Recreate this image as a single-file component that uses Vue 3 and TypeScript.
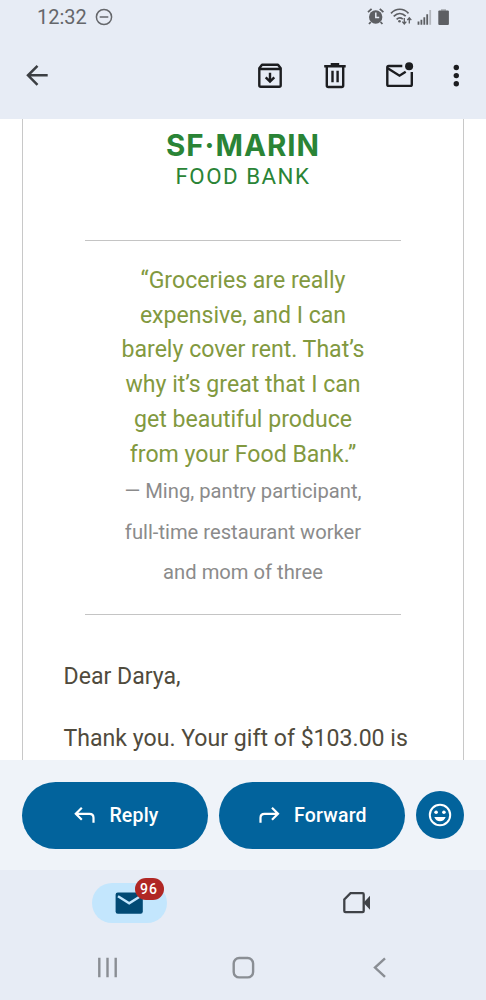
<script setup lang="ts">
const quoteLines: string[] = [
  '“Groceries are really',
  'expensive, and I can',
  'barely cover rent. That’s',
  'why it’s great that I can',
  'get beautiful produce',
  'from your Food Bank.”',
]
const citeLines: string[] = [
  '— Ming, pantry participant,',
  'full-time restaurant worker',
  'and mom of three',
]
const unread = 96
</script>

<template>
  <div class="screen">
    <header class="top">
      <div class="status">
        <span class="clock">12:32</span>
        <svg class="dnd" width="18" height="18" viewBox="0 0 18 18">
          <circle cx="9" cy="9" r="7.6" />
          <path d="M4.7 9h8.6" />
        </svg>
        <svg class="tray" width="86" height="20" viewBox="366 7 86 20">
          <g fill="#5d5f63">
            <circle cx="375.7" cy="17" r="6.7" />
            <path d="M368 12.2l3.6-3.4M383.4 12.2l-3.6-3.4M370.8 22l-1.8 2M380.6 22l1.8 2" stroke="#5d5f63" stroke-width="1.8" />
            <path d="M375.8 12.6v4.8h3.4" fill="none" stroke="#e7ecf5" stroke-width="1.5" />
          </g>
          <g fill="none" stroke="#5d5f63" stroke-width="1.7">
            <path d="M391 13.300c5-5.400 12.500-5.400 17.500 0" />
            <path d="M393.700 16.400c3.700-3.600 8.500-3.600 12 -.2" />
            <path d="M396.600 19.300c2-1.800 4.200-1.800 6.200-.2" />
            <path d="M404.300 18v5.800m-2-2.200 2 2.300 2-2.300M409.300 23.500v-5.600m-2 2.200 2-2.300 2 2.300" stroke-width="1.3" />
          </g>
          <circle cx="399.500" cy="21.300" r="1.300" fill="#5d5f63" />
          <g stroke="#5d5f63" stroke-width="1.800">
            <path d="M418.500 24.800v-3.300M421.400 24.800v-5M424.300 24.800v-7.500M427.200 24.800v-10.500" />
            <path d="M430.200 24.800V10" stroke="#b4b8be" />
          </g>
          <path d="M441 9h5v2h-5z" fill="#b4b8be" />
          <rect x="438.300" y="10.600" width="10.600" height="14.300" rx="1" fill="#5d5f63" />
        </svg>
      </div>
      <div class="toolbar">
        <svg class="back" width="32" height="32" viewBox="21 60 32 32">
          <path d="M47.700 75.300H28M37.500 65.800L28 75.300l9.500 9.500" fill="none" stroke="#3c3f43" stroke-width="2.500" />
        </svg>
        <svg width="32" height="32" viewBox="254 60 32 32">
          <g fill="none" stroke="#1c1d20" stroke-width="2.400" stroke-linejoin="round">
            <path d="M259.300 68.200v17.100q0 1.500 1.500 1.500h18.400q1.500 0 1.500-1.500V68.200l-2.700-3.500h-16zM259.300 69h21.400" />
            <path d="M270 72.800v8M265.700 77.300l4.300 4.200 4.300-4.200" stroke-linejoin="miter" />
          </g>
        </svg>
        <svg class="trash" width="32" height="32" viewBox="319 60 32 32">
          <g fill="none" stroke="#1c1d20" stroke-width="2.400">
            <path d="M324.200 66.200h21.500M330.700 64.300h8.500" />
            <path d="M326.800 66.500v19q0 1.500 1.500 1.500h13.400q1.500 0 1.500-1.500v-19M332.500 70.700v11.500M337.600 70.700v11.500" />
          </g>
        </svg>
        <svg class="letter" width="32" height="32" viewBox="384 60 32 32">
          <g fill="none" stroke="#1c1d20" stroke-width="2.400">
            <path d="M402.300 66h-13.600q-1.400 0-1.400 1.400v17.100q0 1.400 1.400 1.400h21.700q1.400 0 1.400-1.400V72" />
            <path d="M387.700 68.200l11.800 7.500 6.200-4" />
          </g>
          <circle cx="409.100" cy="66.200" r="4" fill="#1c1d20" />
        </svg>
        <svg class="more" width="32" height="32" viewBox="440 60 32 32">
          <g fill="#1c1d20">
            <circle cx="456.300" cy="67.500" r="2.700" />
            <circle cx="456.300" cy="75.600" r="2.700" />
            <circle cx="456.300" cy="83.700" r="2.700" />
          </g>
        </svg>
      </div>
    </header>

    <main class="mail">
      <article class="card">
        <div class="brand">
          <div class="brand-name">SF·MARIN</div>
          <div class="brand-sub">FOOD BANK</div>
        </div>
        <blockquote class="quote">
          <p class="words"><span v-for="line in quoteLines" :key="line">{{ line }}</span></p>
          <p class="cite"><span v-for="line in citeLines" :key="line">{{ line }}</span></p>
        </blockquote>
        <p class="body greeting">Dear Darya,</p>
        <p class="body thanks">Thank you. Your gift of $103.00 is</p>
      </article>
    </main>

    <section class="actions">
      <button class="pill reply">
        <svg width="24" height="24" viewBox="72 803 24 24">
          <path d="M81.800 807.800l-6 6 6 6M76 813.800h13.500q4 0 4 4v5" />
        </svg>
        <span>Reply</span>
      </button>
      <button class="pill forward">
        <svg width="24" height="24" viewBox="257 803 24 24">
          <path d="M272 807.800l6 6-6 6M278 813.800h-13.500q-4 0-4 4v5" />
        </svg>
        <span>Forward</span>
      </button>
      <button class="react">
        <svg width="26" height="26" viewBox="427 802 26 26">
          <circle cx="440" cy="815" r="10.200" fill="none" stroke="#fff" stroke-width="2" />
          <circle cx="436.100" cy="812.300" r="1.800" fill="#fff" />
          <circle cx="443.900" cy="812.300" r="1.800" fill="#fff" />
          <path d="M434.300 817h11.400q-1.600 4.200-5.700 4.200t-5.700-4.200z" fill="#fff" />
        </svg>
      </button>
    </section>

    <nav class="tabs">
      <div class="tab-mail">
        <svg width="28" height="22" viewBox="115 891.500 28 22">
          <rect x="115.600" y="892" width="27.200" height="21.300" rx="2.200" fill="#024a74" />
          <path d="M118 895.800l11.200 7 11.200-7" fill="none" stroke="#c3e6fd" stroke-width="2.500" />
        </svg>
        <span class="badge">{{ unread }}</span>
      </div>
      <svg class="tab-video" width="30" height="24" viewBox="342 891 30 24">
        <path d="M350.500 893.200h12q1.200 0 1.200 1.200v16.500q0 1.200-1.200 1.200h-17q-1.200 0-1.200-1.200v-11.500z" fill="none" stroke="#3f4247" stroke-width="2.300" />
        <path d="M363.500 902.700l6.500-7v14z" fill="#3f4247" />
      </svg>
    </nav>

    <footer class="system">
      <svg width="24" height="24" viewBox="96 956 24 24">
        <path d="M99.300 957.700v19.500M107.500 957.700v19.500M115.700 957.700v19.500" />
      </svg>
      <svg class="home" width="24" height="24" viewBox="231.500 956 24 24">
        <rect x="233.200" y="958" width="19.400" height="19.400" rx="5.500" />
      </svg>
      <svg class="prev" width="24" height="24" viewBox="368 956 24 24">
        <path d="M385 958.300l-10 9.300 10 9.300" />
      </svg>
    </footer>
  </div>
</template>

<style>
body {
  background: #fff;
}
</style>

<style scoped>
.screen {
  display: flex;
  flex-direction: column;
  width: 486px;
  height: 1000px;
  overflow: hidden;
  background: #fff;
  font-family: Roboto, 'Liberation Sans', sans-serif;
}
svg {
  display: block;
  flex: none;
}
p,
blockquote {
  margin: 0;
}
.top {
  flex: none;
  height: 119px;
  background: #e7ecf5;
}
.status {
  display: flex;
  align-items: center;
  height: 34px;
  padding: 0 34px 0 37px;
}
.clock {
  width: 57.500px;
  color: #65676b;
  font-size: 20px;
  line-height: 34px;
}
.dnd {
  fill: none;
  stroke: #65676b;
  stroke-width: 1.5;
}
.tray {
  margin-left: auto;
}
.toolbar {
  display: flex;
  margin-top: 26px;
  padding-left: 21px;
}
.back {
  margin-right: 201px;
}
.trash,
.letter {
  margin-left: 33px;
}
.more {
  margin-left: 24px;
}
.mail {
  flex: none;
  height: 641px;
  overflow: hidden;
}
.card {
  box-sizing: border-box;
  width: 442px;
  height: 641px;
  margin-left: 22px;
  border: solid #c8c8c8;
  border-width: 0 1px;
  white-space: nowrap;
}
.brand {
  height: 121px;
  color: #2a8436;
  text-align: center;
}
.brand-name {
  padding-top: 10px;
  font: 650 29.500px/32px Inter, sans-serif;
  letter-spacing: 1px;
}
.brand-sub {
  padding-top: 1px;
  font-size: 22.300px;
  font-weight: 450;
  line-height: 28px;
  letter-spacing: 1.500px;
}
.quote {
  box-sizing: border-box;
  width: 316px;
  height: 375px;
  margin-left: 62px;
  padding-top: 23px;
  border: solid #c4c4c4;
  border-width: 1px 0;
  text-align: center;
}
.words span,
.cite span {
  display: block;
}
.words {
  color: #82993f;
  font-size: 23.100px;
  line-height: 34.700px;
}
.cite {
  margin-top: -1px;
  color: #8b8b8b;
  font-size: 20.200px;
  line-height: 40.500px;
}
.body {
  padding-left: 40.500px;
  color: #504b3d;
  font-size: 23.100px;
  line-height: 34px;
}
.greeting {
  margin-top: 45px;
}
.thanks {
  margin-top: 28px;
}
.actions {
  box-sizing: border-box;
  flex: none;
  display: flex;
  align-items: center;
  height: 110px;
  padding-left: 21.500px;
  background: #eff3f9;
}
button {
  display: flex;
  align-items: center;
  padding: 0;
  border: 0;
  background: #02639c;
  color: #fff;
}
.pill {
  width: 186.500px;
  height: 67px;
  margin-right: 10.600px;
  border-radius: 34px;
  font: 500 19.500px/24px Roboto, sans-serif;
  letter-spacing: 0.200px;
}
.pill span {
  padding-top: 2px;
}
.pill svg {
  margin: 0 13.400px 0 50.500px;
  fill: none;
  stroke: #fff;
  stroke-width: 2.200;
}
.pill.forward svg {
  margin: 0 13.400px 0 38px;
}
.react {
  justify-content: center;
  width: 48.500px;
  height: 48.500px;
  border-radius: 50%;
}
.tabs {
  box-sizing: border-box;
  flex: none;
  display: flex;
  height: 65px;
  padding: 12.500px 0 0 91.500px;
  background: #e7ecf5;
}
.tab-mail {
  position: relative;
  box-sizing: border-box;
  width: 75.500px;
  height: 40px;
  padding: 9px 0 0 23.500px;
  border-radius: 20px;
  background: #c3e6fd;
}
.badge {
  position: absolute;
  top: -4.500px;
  left: 43px;
  width: 29px;
  height: 22px;
  border-radius: 11px;
  background: #b02724;
  color: #fff;
  font: 500 14px/23px Roboto, sans-serif;
  letter-spacing: 1px;
  text-align: center;
}
.tab-video {
  margin: 8.500px 0 0 175px;
}
.system {
  box-sizing: border-box;
  flex: none;
  display: flex;
  height: 65px;
  padding: 21px 0 0 96px;
  background: #e7ecf5;
}
.system svg {
  fill: none;
  stroke: #8a8e94;
  stroke-width: 2.400;
}
.home {
  margin-left: 111.500px;
}
.prev {
  margin-left: 112.500px;
}
</style>
